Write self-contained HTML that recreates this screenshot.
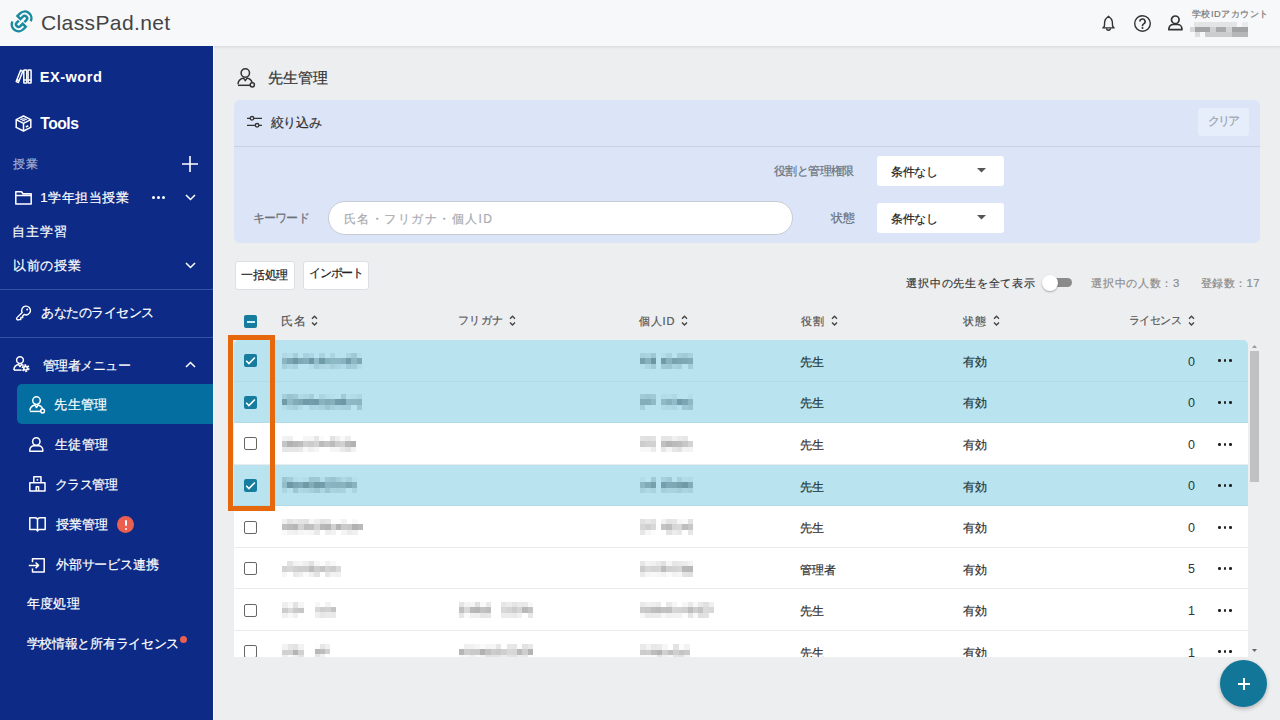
<!DOCTYPE html>
<html><head><meta charset="utf-8">
<style>
*{box-sizing:border-box;margin:0;padding:0}
html,body{width:1280px;height:720px;overflow:hidden}
body{font-family:"Liberation Sans",sans-serif;background:#edeef0;position:relative;color:#333}
.a{position:absolute}
.t{position:absolute;white-space:nowrap;line-height:1;-webkit-text-stroke:0.2px currentColor}
svg.a{overflow:visible}
#hdr{left:0;top:0;width:1280px;height:46px;background:#f7f8fa;box-shadow:0 1px 3px rgba(0,0,0,.10)}
#side{left:0;top:46px;width:213px;height:674px;background:#0c2a86}
.r{position:absolute;left:0;width:1014px;height:41.57px;background:#fff;box-shadow:inset 0 -1px 0 #e9ebee}
.r.sel{background:#b9e3ee;box-shadow:inset 0 -1px 0 #b0dbe7}
.cb{position:absolute;left:244px;width:13px;height:13px;border-radius:2px}
.cb.on{background:#187c9e}
.cb.off{border:1.5px solid #666;background:#fff}
.dots{position:absolute;left:1218px;width:14px;height:3px}
.dots i{position:absolute;top:0;width:2.6px;height:2.6px;border-radius:50%;background:#222}
.mz{position:absolute}
.mz i{position:absolute;background:var(--c)}
.blur{position:absolute;background:#000}
</style></head>
<body>
<!-- HEADER -->
<div id="hdr" class="a"></div>
<svg class="a" style="left:0;top:0" width="44" height="44" viewBox="0 0 44 44" fill="none" stroke="#178a9e" stroke-width="2.4">
<g transform="translate(21.6,21.4) rotate(-45)">
<path d="M6.6 6.4 A6.8 6.8 0 0 0 4.3 -6.8 L0.9 -6.8 L0.9 -2.5 L4.3 -2.5 A2.5 2.5 0 0 1 4.3 2.5 L1.4 2.5"/>
<path transform="rotate(180)" d="M6.6 6.4 A6.8 6.8 0 0 0 4.3 -6.8 L0.9 -6.8 L0.9 -2.5 L4.3 -2.5 A2.5 2.5 0 0 1 4.3 2.5 L1.4 2.5"/>
</g></svg>
<svg class="a" style="left:1102px;top:14.5px" width="13" height="17" viewBox="0 0 13 17" fill="none" stroke="#333" stroke-width="1.4" stroke-linejoin="round">
  <path d="M6.5 1.2 C4.6 2.6 3 3.8 2.7 6.5 L2.4 11.3 L0.9 12.9 H12.1 L10.6 11.3 L10.3 6.5 C10 3.8 8.4 2.6 6.5 1.2 Z"/>
  <path d="M4.6 13.3 a1.9 1.9 0 0 0 3.8 0"/>
</svg>
<svg class="a" style="left:1133.5px;top:14.5px" width="17" height="17" viewBox="0 0 17 17" fill="none" stroke="#333" stroke-width="1.4">
  <circle cx="8.5" cy="8.5" r="7.8"/>
  <path d="M5.9 6.6 a2.6 2.6 0 1 1 3.8 2.3 c-.8.4 -1.2.8 -1.2 1.7 v.6" stroke-width="1.6"/>
  <circle cx="8.5" cy="13" r="1" fill="#333" stroke="none"/>
</svg>
<svg class="a" style="left:1168px;top:15px" width="15" height="16" viewBox="0 0 15 16" fill="none" stroke="#333" stroke-width="1.7" stroke-linejoin="round">
  <circle cx="7.3" cy="4.8" r="3.8"/>
  <path d="M0.9 14.7 v-1 a4.2 4.2 0 0 1 4.2 -4.2 h4.6 a4.2 4.2 0 0 1 4.2 4.2 v1 Z"/>
</svg>
<div class="a" style="left:0;top:0;filter:blur(0.5px)"><div class="a" style="left:1194px;top:22px;width:43px;height:5px;background:#e3e4e6"></div><div class="a" style="left:1242px;top:22px;width:6px;height:5px;background:#eaebed"></div><div class="a" style="left:1190px;top:27px;width:5px;height:5px;background:#d6d7d9"></div><div class="a" style="left:1195px;top:27px;width:15px;height:5px;background:#a3a4a6"></div><div class="a" style="left:1210px;top:27px;width:6px;height:5px;background:#cfd0d2"></div><div class="a" style="left:1216px;top:27px;width:10px;height:5px;background:#a9aaac"></div><div class="a" style="left:1226px;top:27px;width:6px;height:5px;background:#d2d3d5"></div><div class="a" style="left:1232px;top:27px;width:16px;height:5px;background:#a2a3a5"></div><div class="a" style="left:1195px;top:32px;width:5px;height:5px;background:#dcdddf"></div><div class="a" style="left:1205px;top:32px;width:27px;height:5px;background:#cbcccd"></div><div class="a" style="left:1232px;top:32px;width:16px;height:5px;background:#b5b6b8"></div></div>

<!-- SIDEBAR -->
<div id="side" class="a"></div>
<div class="a" style="left:213px;top:46px;width:1.2px;height:674px;background:#fafbfd"></div>
<svg class="a" style="left:15px;top:69px" width="17" height="15" viewBox="0 0 17 15" fill="none" stroke="#fff" stroke-width="1.5" stroke-linejoin="round">
  <path d="M1.2 12.6 L5.6 1.3 L7.8 2.2 L3.4 13.5 Z"/>
  <rect x="8.8" y="0.9" width="3" height="13.2" rx=".5"/><rect x="13.1" y="0.9" width="3" height="13.2" rx=".5"/>
  <path d="M8.8 11 H11.8 M13.1 11 H16.1 M2 10.8 L4.2 11.7"/>
</svg>
<svg class="a" style="left:15px;top:115px" width="17" height="17" viewBox="0 0 17 17" fill="none" stroke="#fff" stroke-width="1.5" stroke-linejoin="round">
  <path d="M8.5 1 L15.8 4.6 V12.4 L8.5 16 L1.2 12.4 V4.6 Z"/>
  <path d="M1.2 4.6 L8.5 8.4 L15.8 4.6 M8.5 8.4 V16"/>
  <path d="M5.3 4.9 A4 2.4 0 0 1 11.7 4.9 M7 6 A2 1.2 0 0 1 10 6" stroke-width="1.2"/>
  <path d="M10.8 12 L13.3 10.8"/>
</svg>
<svg class="a" style="left:182px;top:156px" width="16" height="16" viewBox="0 0 16 16" stroke="#fff" stroke-width="1.6"><path d="M8 0 V16 M0 8 H16"/></svg>
<svg class="a" style="left:14.5px;top:190.5px" width="17" height="14" viewBox="0 0 17 14" fill="none" stroke="#fff" stroke-width="1.5" stroke-linejoin="round">
  <path d="M0.8 0.8 H6.5 L8 2.8 H16.2 V13 H0.8 Z M0.8 4.6 H16.2"/>
</svg>
<div class="a" style="left:151.6px;top:195.8px;width:3.2px;height:3.2px;border-radius:50%;background:#fff"></div>
<div class="a" style="left:156.7px;top:195.8px;width:3.2px;height:3.2px;border-radius:50%;background:#fff"></div>
<div class="a" style="left:161.9px;top:195.8px;width:3.2px;height:3.2px;border-radius:50%;background:#fff"></div>
<svg class="a" style="left:184.5px;top:194px" width="11" height="7" viewBox="0 0 11 7" fill="none" stroke="#fff" stroke-width="1.5"><path d="M1 1 L5.5 5.5 L10 1"/></svg>
<svg class="a" style="left:184.5px;top:262px" width="11" height="7" viewBox="0 0 11 7" fill="none" stroke="#fff" stroke-width="1.5"><path d="M1 1 L5.5 5.5 L10 1"/></svg>
<div class="a" style="left:0;top:289px;width:213px;height:1px;background:#3552a3"></div>
<svg class="a" style="left:15px;top:305.5px" width="17" height="16" viewBox="0 0 17 16" fill="none" stroke="#fff" stroke-width="1.4" stroke-linejoin="round">
  <g transform="translate(10.9,4.7) rotate(-45)">
    <path d="M-3.9 -1.4 A4.4 4.4 0 1 1 -3.9 1.4 L-6 1.4 L-7 2.6 L-8.2 1.4 L-8.8 1.4 L-9.8 2.6 L-11.2 1.4 A1.4 1.4 0 0 1 -11.2 -1.4 Z"/>
  </g>
  <circle cx="12.2" cy="3.4" r="1" fill="#fff" stroke="none"/>
</svg>
<div class="a" style="left:0;top:337px;width:213px;height:1px;background:#3552a3"></div>
<svg class="a" style="left:12.5px;top:356px" width="17" height="17" viewBox="0 0 17 17" fill="none" stroke="#fff" stroke-width="1.5" stroke-linejoin="round">
  <circle cx="7" cy="4.1" r="3.4"/><path d="M0.9 13.9 a6.2 5.6 0 0 1 4.8 -5.3 L7 10.6 L8.4 8.6 a6 5.6 0 0 1 2.2 1"/><path d="M0.9 14.1 H8.6"/>
  <circle cx="12.6" cy="12.2" r="2.6" fill="#fff" stroke="none"/>
  <circle cx="12.6" cy="12.2" r="3.1" stroke-width="1.8" stroke-dasharray="1.8 1.45"/>
  <circle cx="12.6" cy="12.2" r="1" fill="#0c2a86" stroke="none"/>
</svg>
<svg class="a" style="left:185px;top:361px" width="11" height="7" viewBox="0 0 11 7" fill="none" stroke="#fff" stroke-width="1.5"><path d="M1 6 L5.5 1.5 L10 6"/></svg>
<div class="a" style="left:17px;top:384px;width:196px;height:40px;background:#046ea0;border-radius:5px 0 0 5px"></div>
<svg class="a" style="left:29px;top:395.5px" width="17" height="17" viewBox="0 0 17 17" fill="none" stroke="#fff" stroke-width="1.5" stroke-linejoin="round">
  <circle cx="7.5" cy="4.6" r="3.8"/><path d="M0.9 14.5 a6.6 6 0 0 1 5 -5.6 L7.5 11.5 L9.1 8.9 a6.6 6 0 0 1 4.6 4.2"/><path d="M0.9 15.4 H11.8"/><circle cx="13.6" cy="15" r="1.9"/>
</svg>
<svg class="a" style="left:29px;top:437px" width="15" height="15" viewBox="0 0 15 15" fill="none" stroke="#fff" stroke-width="1.5" stroke-linejoin="round">
  <circle cx="7.3" cy="4.5" r="3.7"/><path d="M0.8 14.2 v-1.2 a4.2 4.2 0 0 1 4.2 -4.2 h4.6 a4.2 4.2 0 0 1 4.2 4.2 v1.2 Z"/>
</svg>
<svg class="a" style="left:28.5px;top:476px" width="17" height="16" viewBox="0 0 17 16" fill="none" stroke="#fff" stroke-width="1.5" stroke-linejoin="round">
  <path d="M4.8 0.8 H12 V6.8 H16 V15 H0.8 V6.8 H4.8 Z M4.8 6.8 H12"/><path d="M7.2 15 V10.8 H9.6 V15" /><circle cx="8.4" cy="3.8" r=".9" fill="#fff" stroke="none"/>
</svg>
<svg class="a" style="left:29px;top:517px" width="17" height="15" viewBox="0 0 17 15" fill="none" stroke="#fff" stroke-width="1.5" stroke-linejoin="round">
  <path d="M0.8 0.8 H6 a2.5 2.5 0 0 1 2.5 2.5 V14 a2 2 0 0 0 -2 -1.6 H0.8 Z M16.2 0.8 H11 a2.5 2.5 0 0 0 -2.5 2.5 V14 a2 2 0 0 1 2 -1.6 H16.2 Z"/>
</svg>
<div class="a" style="left:117px;top:516px;width:17px;height:17px;border-radius:50%;background:#ea5f4f"></div>
<div class="a" style="left:124.6px;top:519.5px;width:2px;height:6.5px;border-radius:1px;background:#fff"></div>
<div class="a" style="left:124.5px;top:527.5px;width:2.2px;height:2.2px;border-radius:50%;background:#fff"></div>
<svg class="a" style="left:28px;top:557.5px" width="17" height="15" viewBox="0 0 17 15" fill="none" stroke="#fff" stroke-width="1.5" stroke-linejoin="round">
  <path d="M4.5 4.2 V0.8 H16.2 V14 H4.5 V10.6 M0.8 7.4 H10.5 M7.6 4.5 L10.5 7.4 L7.6 10.3"/>
</svg>
<div class="a" style="left:180px;top:635.5px;width:7px;height:7px;border-radius:50%;background:#ea5f4f"></div>

<!-- MAIN -->
<svg class="a" style="left:237px;top:67.5px" width="19" height="19" viewBox="0 0 19 19" fill="none" stroke="#333" stroke-width="1.5" stroke-linejoin="round">
  <circle cx="8.3" cy="5" r="4.2"/><path d="M1 16.3 a7.3 6.6 0 0 1 5.5 -6.2 L8.3 12.6 L10 10.1 a7.3 6.6 0 0 1 5.2 4.6"/><path d="M1 17.3 H13"/><circle cx="15.3" cy="16.8" r="2.1"/>
</svg>
<div class="a" style="left:234px;top:100px;width:1026px;height:143px;background:#dbe5f7;border-radius:6px"></div>
<div class="a" style="left:234px;top:146px;width:1026px;height:1px;background:#c7d2e5"></div>
<svg class="a" style="left:247px;top:116px" width="15" height="12" viewBox="0 0 15 12" fill="none" stroke="#333" stroke-width="1.3">
  <path d="M0 2.3 H3.2 M6.8 2.3 H15 M0 9.3 H8.3 M11.9 9.3 H15"/><circle cx="5" cy="2.3" r="1.8"/><circle cx="10.1" cy="9.3" r="1.8"/>
</svg>
<div class="a" style="left:1198px;top:108px;width:51px;height:28px;background:#e6edfb;border-radius:3px"></div>
<div class="a" style="left:877px;top:156px;width:127px;height:30px;background:#fff;border-radius:3px"></div>
<svg class="a" style="left:977px;top:168px" width="9" height="5" viewBox="0 0 9 5"><path d="M0 0 H9 L4.5 4.5 Z" fill="#555"/></svg>
<div class="a" style="left:327.5px;top:201px;width:465px;height:34px;background:#fff;border-radius:17px;border:1px solid #c8ccd4"></div>
<div class="a" style="left:877px;top:203px;width:127px;height:30px;background:#fff;border-radius:3px"></div>
<svg class="a" style="left:977px;top:215px" width="9" height="5" viewBox="0 0 9 5"><path d="M0 0 H9 L4.5 4.5 Z" fill="#555"/></svg>
<div class="a" style="left:235px;top:260.5px;width:60px;height:29px;background:#fff;border:1px solid #dcdfe4;border-radius:3px"></div>
<div class="a" style="left:302.5px;top:260.5px;width:66px;height:29px;background:#fff;border:1px solid #dcdfe4;border-radius:3px"></div>
<div class="a" style="left:1043px;top:278px;width:29px;height:9px;border-radius:5px;background:#8a8a8a"></div>
<div class="a" style="left:1041.5px;top:274.5px;width:16px;height:16px;border-radius:50%;background:#fff;box-shadow:0 1px 2px rgba(0,0,0,.3)"></div>

<div class="a" style="left:244px;top:315px;width:13px;height:13px;border-radius:2px;background:#187c9e"></div>
<div class="a" style="left:246.5px;top:320.5px;width:8px;height:2px;background:#c9f1fb"></div>
<svg class="a" style="left:311px;top:315px" width="7" height="12" viewBox="0 0 7 12" fill="none" stroke="#444" stroke-width="1.4"><path d="M1 3.8 L3.5 1.3 L6 3.8 M1 7.5 L3.5 10 L6 7.5"/></svg>
<svg class="a" style="left:509px;top:315px" width="7" height="12" viewBox="0 0 7 12" fill="none" stroke="#444" stroke-width="1.4"><path d="M1 3.8 L3.5 1.3 L6 3.8 M1 7.5 L3.5 10 L6 7.5"/></svg>
<svg class="a" style="left:681px;top:315px" width="7" height="12" viewBox="0 0 7 12" fill="none" stroke="#444" stroke-width="1.4"><path d="M1 3.8 L3.5 1.3 L6 3.8 M1 7.5 L3.5 10 L6 7.5"/></svg>
<svg class="a" style="left:830.5px;top:315px" width="7" height="12" viewBox="0 0 7 12" fill="none" stroke="#444" stroke-width="1.4"><path d="M1 3.8 L3.5 1.3 L6 3.8 M1 7.5 L3.5 10 L6 7.5"/></svg>
<svg class="a" style="left:992.5px;top:315px" width="7" height="12" viewBox="0 0 7 12" fill="none" stroke="#444" stroke-width="1.4"><path d="M1 3.8 L3.5 1.3 L6 3.8 M1 7.5 L3.5 10 L6 7.5"/></svg>
<svg class="a" style="left:1188px;top:315px" width="7" height="12" viewBox="0 0 7 12" fill="none" stroke="#444" stroke-width="1.4"><path d="M1 3.8 L3.5 1.3 L6 3.8 M1 7.5 L3.5 10 L6 7.5"/></svg>

<div class="a" style="left:234px;top:340px;width:1014px;height:317px;overflow:hidden;border-radius:5px 5px 0 0">
<div class="r sel" style="top:0.00px"></div>
<div class="r sel" style="top:41.57px"></div>
<div class="r" style="top:83.14px"></div>
<div class="r sel" style="top:124.71px"></div>
<div class="r" style="top:166.28px"></div>
<div class="r" style="top:207.85px"></div>
<div class="r" style="top:249.42px"></div>
<div class="r" style="top:290.99px"></div>
</div>
<div class="a" style="left:0;top:0;width:1280px;height:657px;overflow:hidden">
<div class="cb on" style="top:354.29px"></div><svg class="a" style="left:244px;top:354.29px" width="13" height="13" viewBox="0 0 13 13" fill="none" stroke="#fff" stroke-width="1.6"><path d="M2.2 6.8 L4.9 9.5 L10.9 3.5"/></svg>
<div class="mz" style="left:282px;top:353px;width:80px;height:16.00px;--c:#0d3a48"><i style="left:0px;top:0px;width:5px;height:5px;opacity:0.06"></i><i style="left:5px;top:0px;width:6px;height:5px;opacity:0.03"></i><i style="left:11px;top:0px;width:5px;height:5px;opacity:0.12"></i><i style="left:21px;top:0px;width:6px;height:5px;opacity:0.10"></i><i style="left:27px;top:0px;width:5px;height:5px;opacity:0.07"></i><i style="left:37px;top:0px;width:6px;height:5px;opacity:0.09"></i><i style="left:48px;top:0px;width:5px;height:5px;opacity:0.08"></i><i style="left:64px;top:0px;width:5px;height:5px;opacity:0.08"></i><i style="left:69px;top:0px;width:6px;height:5px;opacity:0.15"></i><i style="left:75px;top:0px;width:5px;height:5px;opacity:0.02"></i><i style="left:0px;top:5px;width:5px;height:6px;opacity:0.27"></i><i style="left:5px;top:5px;width:6px;height:6px;opacity:0.36"></i><i style="left:11px;top:5px;width:5px;height:6px;opacity:0.44"></i><i style="left:16px;top:5px;width:5px;height:6px;opacity:0.35"></i><i style="left:21px;top:5px;width:6px;height:6px;opacity:0.31"></i><i style="left:27px;top:5px;width:5px;height:6px;opacity:0.44"></i><i style="left:32px;top:5px;width:5px;height:6px;opacity:0.23"></i><i style="left:37px;top:5px;width:6px;height:6px;opacity:0.42"></i><i style="left:43px;top:5px;width:5px;height:6px;opacity:0.29"></i><i style="left:48px;top:5px;width:5px;height:6px;opacity:0.25"></i><i style="left:53px;top:5px;width:6px;height:6px;opacity:0.25"></i><i style="left:59px;top:5px;width:5px;height:6px;opacity:0.29"></i><i style="left:64px;top:5px;width:5px;height:6px;opacity:0.41"></i><i style="left:69px;top:5px;width:6px;height:6px;opacity:0.26"></i><i style="left:75px;top:5px;width:5px;height:6px;opacity:0.35"></i><i style="left:0px;top:11px;width:5px;height:5px;opacity:0.12"></i><i style="left:5px;top:11px;width:6px;height:5px;opacity:0.07"></i><i style="left:11px;top:11px;width:5px;height:5px;opacity:0.10"></i><i style="left:27px;top:11px;width:5px;height:5px;opacity:0.04"></i><i style="left:32px;top:11px;width:5px;height:5px;opacity:0.12"></i><i style="left:37px;top:11px;width:6px;height:5px;opacity:0.08"></i><i style="left:43px;top:11px;width:5px;height:5px;opacity:0.06"></i><i style="left:48px;top:11px;width:5px;height:5px;opacity:0.11"></i><i style="left:53px;top:11px;width:6px;height:5px;opacity:0.08"></i><i style="left:59px;top:11px;width:5px;height:5px;opacity:0.05"></i><i style="left:64px;top:11px;width:5px;height:5px;opacity:0.14"></i><i style="left:69px;top:11px;width:6px;height:5px;opacity:0.13"></i><i style="left:75px;top:11px;width:5px;height:5px;opacity:0.04"></i></div>
<div class="mz" style="left:640px;top:353px;width:16px;height:16.00px;--c:#0d3a48"><i style="left:0px;top:0px;width:5px;height:5px;opacity:0.10"></i><i style="left:5px;top:0px;width:6px;height:5px;opacity:0.09"></i><i style="left:11px;top:0px;width:5px;height:5px;opacity:0.16"></i><i style="left:0px;top:5px;width:5px;height:6px;opacity:0.39"></i><i style="left:5px;top:5px;width:6px;height:6px;opacity:0.29"></i><i style="left:11px;top:5px;width:5px;height:6px;opacity:0.45"></i><i style="left:0px;top:11px;width:5px;height:5px;opacity:0.02"></i><i style="left:5px;top:11px;width:6px;height:5px;opacity:0.08"></i><i style="left:11px;top:11px;width:5px;height:5px;opacity:0.14"></i></div>
<div class="mz" style="left:661px;top:353px;width:32px;height:16.00px;--c:#0d3a48"><i style="left:0px;top:0px;width:5px;height:5px;opacity:0.03"></i><i style="left:5px;top:0px;width:6px;height:5px;opacity:0.09"></i><i style="left:16px;top:0px;width:5px;height:5px;opacity:0.12"></i><i style="left:21px;top:0px;width:6px;height:5px;opacity:0.14"></i><i style="left:27px;top:0px;width:5px;height:5px;opacity:0.10"></i><i style="left:0px;top:5px;width:5px;height:6px;opacity:0.42"></i><i style="left:5px;top:5px;width:6px;height:6px;opacity:0.29"></i><i style="left:11px;top:5px;width:5px;height:6px;opacity:0.38"></i><i style="left:16px;top:5px;width:5px;height:6px;opacity:0.36"></i><i style="left:21px;top:5px;width:6px;height:6px;opacity:0.35"></i><i style="left:27px;top:5px;width:5px;height:6px;opacity:0.32"></i><i style="left:0px;top:11px;width:5px;height:5px;opacity:0.15"></i><i style="left:5px;top:11px;width:6px;height:5px;opacity:0.17"></i><i style="left:11px;top:11px;width:5px;height:5px;opacity:0.09"></i><i style="left:16px;top:11px;width:5px;height:5px;opacity:0.12"></i><i style="left:27px;top:11px;width:5px;height:5px;opacity:0.13"></i></div>
<div class="dots" style="top:359px"><i style="left:0"></i><i style="left:5.5px"></i><i style="left:11px"></i></div>
<div class="cb on" style="top:395.86px"></div><svg class="a" style="left:244px;top:395.86px" width="13" height="13" viewBox="0 0 13 13" fill="none" stroke="#fff" stroke-width="1.6"><path d="M2.2 6.8 L4.9 9.5 L10.9 3.5"/></svg>
<div class="mz" style="left:282px;top:394px;width:80px;height:16.00px;--c:#0d3a48"><i style="left:0px;top:0px;width:5px;height:5px;opacity:0.12"></i><i style="left:5px;top:0px;width:6px;height:5px;opacity:0.18"></i><i style="left:11px;top:0px;width:5px;height:5px;opacity:0.15"></i><i style="left:16px;top:0px;width:5px;height:5px;opacity:0.05"></i><i style="left:21px;top:0px;width:6px;height:5px;opacity:0.07"></i><i style="left:27px;top:0px;width:5px;height:5px;opacity:0.12"></i><i style="left:37px;top:0px;width:6px;height:5px;opacity:0.08"></i><i style="left:43px;top:0px;width:5px;height:5px;opacity:0.03"></i><i style="left:48px;top:0px;width:5px;height:5px;opacity:0.02"></i><i style="left:59px;top:0px;width:5px;height:5px;opacity:0.14"></i><i style="left:64px;top:0px;width:5px;height:5px;opacity:0.02"></i><i style="left:69px;top:0px;width:6px;height:5px;opacity:0.04"></i><i style="left:75px;top:0px;width:5px;height:5px;opacity:0.07"></i><i style="left:0px;top:5px;width:5px;height:6px;opacity:0.42"></i><i style="left:5px;top:5px;width:6px;height:6px;opacity:0.24"></i><i style="left:11px;top:5px;width:5px;height:6px;opacity:0.32"></i><i style="left:16px;top:5px;width:5px;height:6px;opacity:0.35"></i><i style="left:21px;top:5px;width:6px;height:6px;opacity:0.42"></i><i style="left:27px;top:5px;width:5px;height:6px;opacity:0.41"></i><i style="left:32px;top:5px;width:5px;height:6px;opacity:0.42"></i><i style="left:37px;top:5px;width:6px;height:6px;opacity:0.28"></i><i style="left:43px;top:5px;width:5px;height:6px;opacity:0.32"></i><i style="left:48px;top:5px;width:5px;height:6px;opacity:0.30"></i><i style="left:53px;top:5px;width:6px;height:6px;opacity:0.42"></i><i style="left:59px;top:5px;width:5px;height:6px;opacity:0.44"></i><i style="left:64px;top:5px;width:5px;height:6px;opacity:0.25"></i><i style="left:69px;top:5px;width:6px;height:6px;opacity:0.26"></i><i style="left:75px;top:5px;width:5px;height:6px;opacity:0.27"></i><i style="left:0px;top:11px;width:5px;height:5px;opacity:0.04"></i><i style="left:5px;top:11px;width:6px;height:5px;opacity:0.09"></i><i style="left:11px;top:11px;width:5px;height:5px;opacity:0.11"></i><i style="left:16px;top:11px;width:5px;height:5px;opacity:0.05"></i><i style="left:27px;top:11px;width:5px;height:5px;opacity:0.08"></i><i style="left:32px;top:11px;width:5px;height:5px;opacity:0.07"></i><i style="left:37px;top:11px;width:6px;height:5px;opacity:0.10"></i><i style="left:43px;top:11px;width:5px;height:5px;opacity:0.17"></i><i style="left:48px;top:11px;width:5px;height:5px;opacity:0.12"></i><i style="left:53px;top:11px;width:6px;height:5px;opacity:0.09"></i><i style="left:59px;top:11px;width:5px;height:5px;opacity:0.11"></i><i style="left:64px;top:11px;width:5px;height:5px;opacity:0.12"></i><i style="left:75px;top:11px;width:5px;height:5px;opacity:0.16"></i></div>
<div class="mz" style="left:640px;top:394px;width:16px;height:16.00px;--c:#0d3a48"><i style="left:0px;top:0px;width:5px;height:5px;opacity:0.14"></i><i style="left:5px;top:0px;width:6px;height:5px;opacity:0.16"></i><i style="left:11px;top:0px;width:5px;height:5px;opacity:0.14"></i><i style="left:0px;top:5px;width:5px;height:6px;opacity:0.31"></i><i style="left:5px;top:5px;width:6px;height:6px;opacity:0.31"></i><i style="left:11px;top:5px;width:5px;height:6px;opacity:0.24"></i><i style="left:0px;top:11px;width:5px;height:5px;opacity:0.11"></i></div>
<div class="mz" style="left:661px;top:394px;width:32px;height:16.00px;--c:#0d3a48"><i style="left:0px;top:0px;width:5px;height:5px;opacity:0.04"></i><i style="left:5px;top:0px;width:6px;height:5px;opacity:0.03"></i><i style="left:11px;top:0px;width:5px;height:5px;opacity:0.06"></i><i style="left:27px;top:0px;width:5px;height:5px;opacity:0.03"></i><i style="left:0px;top:5px;width:5px;height:6px;opacity:0.24"></i><i style="left:5px;top:5px;width:6px;height:6px;opacity:0.30"></i><i style="left:11px;top:5px;width:5px;height:6px;opacity:0.23"></i><i style="left:16px;top:5px;width:5px;height:6px;opacity:0.42"></i><i style="left:21px;top:5px;width:6px;height:6px;opacity:0.36"></i><i style="left:27px;top:5px;width:5px;height:6px;opacity:0.25"></i><i style="left:0px;top:11px;width:5px;height:5px;opacity:0.05"></i><i style="left:5px;top:11px;width:6px;height:5px;opacity:0.06"></i><i style="left:11px;top:11px;width:5px;height:5px;opacity:0.07"></i><i style="left:16px;top:11px;width:5px;height:5px;opacity:0.02"></i><i style="left:21px;top:11px;width:6px;height:5px;opacity:0.15"></i><i style="left:27px;top:11px;width:5px;height:5px;opacity:0.18"></i></div>
<div class="dots" style="top:401px"><i style="left:0"></i><i style="left:5.5px"></i><i style="left:11px"></i></div>
<div class="cb off" style="top:437.43px"></div>
<div class="mz" style="left:282px;top:436px;width:74px;height:15.86px;--c:#555"><i style="left:0px;top:0px;width:5px;height:5px;opacity:0.08"></i><i style="left:5px;top:0px;width:6px;height:5px;opacity:0.09"></i><i style="left:21px;top:0px;width:5px;height:5px;opacity:0.06"></i><i style="left:26px;top:0px;width:6px;height:5px;opacity:0.05"></i><i style="left:32px;top:0px;width:5px;height:5px;opacity:0.15"></i><i style="left:37px;top:0px;width:5px;height:5px;opacity:0.03"></i><i style="left:48px;top:0px;width:5px;height:5px;opacity:0.17"></i><i style="left:53px;top:0px;width:5px;height:5px;opacity:0.10"></i><i style="left:58px;top:0px;width:5px;height:5px;opacity:0.03"></i><i style="left:63px;top:0px;width:6px;height:5px;opacity:0.10"></i><i style="left:0px;top:5px;width:5px;height:6px;opacity:0.34"></i><i style="left:5px;top:5px;width:6px;height:6px;opacity:0.45"></i><i style="left:11px;top:5px;width:5px;height:6px;opacity:0.42"></i><i style="left:16px;top:5px;width:5px;height:6px;opacity:0.38"></i><i style="left:21px;top:5px;width:5px;height:6px;opacity:0.28"></i><i style="left:26px;top:5px;width:6px;height:6px;opacity:0.30"></i><i style="left:32px;top:5px;width:5px;height:6px;opacity:0.26"></i><i style="left:37px;top:5px;width:5px;height:6px;opacity:0.40"></i><i style="left:42px;top:5px;width:6px;height:6px;opacity:0.34"></i><i style="left:48px;top:5px;width:5px;height:6px;opacity:0.40"></i><i style="left:53px;top:5px;width:5px;height:6px;opacity:0.30"></i><i style="left:58px;top:5px;width:5px;height:6px;opacity:0.27"></i><i style="left:63px;top:5px;width:6px;height:6px;opacity:0.41"></i><i style="left:69px;top:5px;width:5px;height:6px;opacity:0.45"></i><i style="left:0px;top:11px;width:5px;height:5px;opacity:0.15"></i><i style="left:5px;top:11px;width:6px;height:5px;opacity:0.15"></i><i style="left:11px;top:11px;width:5px;height:5px;opacity:0.15"></i><i style="left:16px;top:11px;width:5px;height:5px;opacity:0.13"></i><i style="left:21px;top:11px;width:5px;height:5px;opacity:0.04"></i><i style="left:26px;top:11px;width:6px;height:5px;opacity:0.09"></i><i style="left:32px;top:11px;width:5px;height:5px;opacity:0.06"></i><i style="left:48px;top:11px;width:5px;height:5px;opacity:0.05"></i><i style="left:53px;top:11px;width:5px;height:5px;opacity:0.05"></i><i style="left:58px;top:11px;width:5px;height:5px;opacity:0.12"></i><i style="left:63px;top:11px;width:6px;height:5px;opacity:0.17"></i><i style="left:69px;top:11px;width:5px;height:5px;opacity:0.08"></i></div>
<div class="mz" style="left:640px;top:436px;width:16px;height:16.00px;--c:#555"><i style="left:0px;top:0px;width:5px;height:5px;opacity:0.17"></i><i style="left:5px;top:0px;width:6px;height:5px;opacity:0.18"></i><i style="left:11px;top:0px;width:5px;height:5px;opacity:0.17"></i><i style="left:0px;top:5px;width:5px;height:6px;opacity:0.30"></i><i style="left:5px;top:5px;width:6px;height:6px;opacity:0.27"></i><i style="left:11px;top:5px;width:5px;height:6px;opacity:0.27"></i><i style="left:0px;top:11px;width:5px;height:5px;opacity:0.04"></i><i style="left:5px;top:11px;width:6px;height:5px;opacity:0.04"></i><i style="left:11px;top:11px;width:5px;height:5px;opacity:0.11"></i></div>
<div class="mz" style="left:661px;top:436px;width:32px;height:16.00px;--c:#555"><i style="left:0px;top:0px;width:5px;height:5px;opacity:0.16"></i><i style="left:5px;top:0px;width:6px;height:5px;opacity:0.15"></i><i style="left:11px;top:0px;width:5px;height:5px;opacity:0.09"></i><i style="left:16px;top:0px;width:5px;height:5px;opacity:0.12"></i><i style="left:21px;top:0px;width:6px;height:5px;opacity:0.14"></i><i style="left:0px;top:5px;width:5px;height:6px;opacity:0.37"></i><i style="left:5px;top:5px;width:6px;height:6px;opacity:0.43"></i><i style="left:11px;top:5px;width:5px;height:6px;opacity:0.40"></i><i style="left:16px;top:5px;width:5px;height:6px;opacity:0.39"></i><i style="left:21px;top:5px;width:6px;height:6px;opacity:0.33"></i><i style="left:27px;top:5px;width:5px;height:6px;opacity:0.26"></i><i style="left:0px;top:11px;width:5px;height:5px;opacity:0.14"></i><i style="left:5px;top:11px;width:6px;height:5px;opacity:0.06"></i><i style="left:11px;top:11px;width:5px;height:5px;opacity:0.14"></i><i style="left:16px;top:11px;width:5px;height:5px;opacity:0.17"></i><i style="left:21px;top:11px;width:6px;height:5px;opacity:0.07"></i><i style="left:27px;top:11px;width:5px;height:5px;opacity:0.07"></i></div>
<div class="dots" style="top:443px"><i style="left:0"></i><i style="left:5.5px"></i><i style="left:11px"></i></div>
<div class="cb on" style="top:479.00px"></div><svg class="a" style="left:244px;top:479.00px" width="13" height="13" viewBox="0 0 13 13" fill="none" stroke="#fff" stroke-width="1.6"><path d="M2.2 6.8 L4.9 9.5 L10.9 3.5"/></svg>
<div class="mz" style="left:282px;top:477px;width:75px;height:16.07px;--c:#0d3a48"><i style="left:0px;top:0px;width:5px;height:5px;opacity:0.17"></i><i style="left:5px;top:0px;width:6px;height:5px;opacity:0.13"></i><i style="left:11px;top:0px;width:5px;height:5px;opacity:0.03"></i><i style="left:16px;top:0px;width:5px;height:5px;opacity:0.02"></i><i style="left:21px;top:0px;width:6px;height:5px;opacity:0.03"></i><i style="left:27px;top:0px;width:5px;height:5px;opacity:0.16"></i><i style="left:32px;top:0px;width:6px;height:5px;opacity:0.15"></i><i style="left:38px;top:0px;width:5px;height:5px;opacity:0.03"></i><i style="left:43px;top:0px;width:5px;height:5px;opacity:0.15"></i><i style="left:48px;top:0px;width:6px;height:5px;opacity:0.18"></i><i style="left:54px;top:0px;width:5px;height:5px;opacity:0.12"></i><i style="left:59px;top:0px;width:5px;height:5px;opacity:0.06"></i><i style="left:64px;top:0px;width:6px;height:5px;opacity:0.10"></i><i style="left:70px;top:0px;width:5px;height:5px;opacity:0.02"></i><i style="left:0px;top:5px;width:5px;height:6px;opacity:0.22"></i><i style="left:5px;top:5px;width:6px;height:6px;opacity:0.44"></i><i style="left:11px;top:5px;width:5px;height:6px;opacity:0.37"></i><i style="left:16px;top:5px;width:5px;height:6px;opacity:0.34"></i><i style="left:21px;top:5px;width:6px;height:6px;opacity:0.43"></i><i style="left:27px;top:5px;width:5px;height:6px;opacity:0.32"></i><i style="left:32px;top:5px;width:6px;height:6px;opacity:0.42"></i><i style="left:38px;top:5px;width:5px;height:6px;opacity:0.41"></i><i style="left:43px;top:5px;width:5px;height:6px;opacity:0.27"></i><i style="left:48px;top:5px;width:6px;height:6px;opacity:0.28"></i><i style="left:54px;top:5px;width:5px;height:6px;opacity:0.29"></i><i style="left:59px;top:5px;width:5px;height:6px;opacity:0.28"></i><i style="left:64px;top:5px;width:6px;height:6px;opacity:0.35"></i><i style="left:70px;top:5px;width:5px;height:6px;opacity:0.28"></i><i style="left:0px;top:11px;width:5px;height:5px;opacity:0.08"></i><i style="left:5px;top:11px;width:6px;height:5px;opacity:0.02"></i><i style="left:11px;top:11px;width:5px;height:5px;opacity:0.16"></i><i style="left:16px;top:11px;width:5px;height:5px;opacity:0.06"></i><i style="left:21px;top:11px;width:6px;height:5px;opacity:0.08"></i><i style="left:27px;top:11px;width:5px;height:5px;opacity:0.11"></i><i style="left:32px;top:11px;width:6px;height:5px;opacity:0.16"></i><i style="left:38px;top:11px;width:5px;height:5px;opacity:0.08"></i><i style="left:43px;top:11px;width:5px;height:5px;opacity:0.17"></i><i style="left:48px;top:11px;width:6px;height:5px;opacity:0.09"></i><i style="left:54px;top:11px;width:5px;height:5px;opacity:0.10"></i><i style="left:59px;top:11px;width:5px;height:5px;opacity:0.09"></i><i style="left:70px;top:11px;width:5px;height:5px;opacity:0.08"></i></div>
<div class="mz" style="left:640px;top:477px;width:16px;height:16.00px;--c:#0d3a48"><i style="left:0px;top:0px;width:5px;height:5px;opacity:0.03"></i><i style="left:11px;top:0px;width:5px;height:5px;opacity:0.14"></i><i style="left:0px;top:5px;width:5px;height:6px;opacity:0.26"></i><i style="left:5px;top:5px;width:6px;height:6px;opacity:0.33"></i><i style="left:11px;top:5px;width:5px;height:6px;opacity:0.39"></i><i style="left:0px;top:11px;width:5px;height:5px;opacity:0.10"></i><i style="left:5px;top:11px;width:6px;height:5px;opacity:0.06"></i><i style="left:11px;top:11px;width:5px;height:5px;opacity:0.09"></i></div>
<div class="mz" style="left:661px;top:477px;width:32px;height:16.00px;--c:#0d3a48"><i style="left:0px;top:0px;width:5px;height:5px;opacity:0.10"></i><i style="left:5px;top:0px;width:6px;height:5px;opacity:0.14"></i><i style="left:16px;top:0px;width:5px;height:5px;opacity:0.10"></i><i style="left:21px;top:0px;width:6px;height:5px;opacity:0.04"></i><i style="left:27px;top:0px;width:5px;height:5px;opacity:0.05"></i><i style="left:0px;top:5px;width:5px;height:6px;opacity:0.40"></i><i style="left:5px;top:5px;width:6px;height:6px;opacity:0.34"></i><i style="left:11px;top:5px;width:5px;height:6px;opacity:0.35"></i><i style="left:16px;top:5px;width:5px;height:6px;opacity:0.39"></i><i style="left:21px;top:5px;width:6px;height:6px;opacity:0.43"></i><i style="left:27px;top:5px;width:5px;height:6px;opacity:0.32"></i><i style="left:0px;top:11px;width:5px;height:5px;opacity:0.11"></i><i style="left:5px;top:11px;width:6px;height:5px;opacity:0.09"></i><i style="left:11px;top:11px;width:5px;height:5px;opacity:0.09"></i><i style="left:16px;top:11px;width:5px;height:5px;opacity:0.12"></i><i style="left:21px;top:11px;width:6px;height:5px;opacity:0.08"></i><i style="left:27px;top:11px;width:5px;height:5px;opacity:0.10"></i></div>
<div class="dots" style="top:484px"><i style="left:0"></i><i style="left:5.5px"></i><i style="left:11px"></i></div>
<div class="cb off" style="top:520.56px"></div>
<div class="mz" style="left:282px;top:519px;width:81px;height:16.20px;--c:#555"><i style="left:0px;top:0px;width:5px;height:5px;opacity:0.09"></i><i style="left:5px;top:0px;width:6px;height:5px;opacity:0.17"></i><i style="left:11px;top:0px;width:5px;height:5px;opacity:0.13"></i><i style="left:16px;top:0px;width:6px;height:5px;opacity:0.16"></i><i style="left:22px;top:0px;width:5px;height:5px;opacity:0.17"></i><i style="left:27px;top:0px;width:5px;height:5px;opacity:0.05"></i><i style="left:32px;top:0px;width:6px;height:5px;opacity:0.10"></i><i style="left:38px;top:0px;width:5px;height:5px;opacity:0.17"></i><i style="left:43px;top:0px;width:6px;height:5px;opacity:0.15"></i><i style="left:49px;top:0px;width:5px;height:5px;opacity:0.02"></i><i style="left:54px;top:0px;width:5px;height:5px;opacity:0.02"></i><i style="left:59px;top:0px;width:6px;height:5px;opacity:0.08"></i><i style="left:70px;top:0px;width:6px;height:5px;opacity:0.04"></i><i style="left:0px;top:5px;width:5px;height:6px;opacity:0.37"></i><i style="left:5px;top:5px;width:6px;height:6px;opacity:0.40"></i><i style="left:11px;top:5px;width:5px;height:6px;opacity:0.43"></i><i style="left:16px;top:5px;width:6px;height:6px;opacity:0.26"></i><i style="left:22px;top:5px;width:5px;height:6px;opacity:0.38"></i><i style="left:27px;top:5px;width:5px;height:6px;opacity:0.37"></i><i style="left:32px;top:5px;width:6px;height:6px;opacity:0.25"></i><i style="left:38px;top:5px;width:5px;height:6px;opacity:0.42"></i><i style="left:43px;top:5px;width:6px;height:6px;opacity:0.44"></i><i style="left:49px;top:5px;width:5px;height:6px;opacity:0.27"></i><i style="left:54px;top:5px;width:5px;height:6px;opacity:0.44"></i><i style="left:59px;top:5px;width:6px;height:6px;opacity:0.31"></i><i style="left:65px;top:5px;width:5px;height:6px;opacity:0.33"></i><i style="left:70px;top:5px;width:6px;height:6px;opacity:0.45"></i><i style="left:76px;top:5px;width:5px;height:6px;opacity:0.41"></i><i style="left:0px;top:11px;width:5px;height:5px;opacity:0.03"></i><i style="left:5px;top:11px;width:6px;height:5px;opacity:0.08"></i><i style="left:11px;top:11px;width:5px;height:5px;opacity:0.09"></i><i style="left:16px;top:11px;width:6px;height:5px;opacity:0.06"></i><i style="left:22px;top:11px;width:5px;height:5px;opacity:0.04"></i><i style="left:27px;top:11px;width:5px;height:5px;opacity:0.06"></i><i style="left:32px;top:11px;width:6px;height:5px;opacity:0.13"></i><i style="left:43px;top:11px;width:6px;height:5px;opacity:0.10"></i><i style="left:49px;top:11px;width:5px;height:5px;opacity:0.08"></i><i style="left:59px;top:11px;width:6px;height:5px;opacity:0.06"></i><i style="left:65px;top:11px;width:5px;height:5px;opacity:0.11"></i><i style="left:70px;top:11px;width:6px;height:5px;opacity:0.09"></i></div>
<div class="mz" style="left:640px;top:519px;width:16px;height:16.00px;--c:#555"><i style="left:0px;top:0px;width:5px;height:5px;opacity:0.18"></i><i style="left:5px;top:0px;width:6px;height:5px;opacity:0.14"></i><i style="left:11px;top:0px;width:5px;height:5px;opacity:0.17"></i><i style="left:0px;top:5px;width:5px;height:6px;opacity:0.24"></i><i style="left:5px;top:5px;width:6px;height:6px;opacity:0.28"></i><i style="left:11px;top:5px;width:5px;height:6px;opacity:0.23"></i><i style="left:0px;top:11px;width:5px;height:5px;opacity:0.14"></i><i style="left:5px;top:11px;width:6px;height:5px;opacity:0.05"></i><i style="left:11px;top:11px;width:5px;height:5px;opacity:0.02"></i></div>
<div class="mz" style="left:661px;top:519px;width:32px;height:16.00px;--c:#555"><i style="left:0px;top:0px;width:5px;height:5px;opacity:0.08"></i><i style="left:5px;top:0px;width:6px;height:5px;opacity:0.16"></i><i style="left:11px;top:0px;width:5px;height:5px;opacity:0.15"></i><i style="left:16px;top:0px;width:5px;height:5px;opacity:0.05"></i><i style="left:21px;top:0px;width:6px;height:5px;opacity:0.03"></i><i style="left:27px;top:0px;width:5px;height:5px;opacity:0.17"></i><i style="left:0px;top:5px;width:5px;height:6px;opacity:0.35"></i><i style="left:5px;top:5px;width:6px;height:6px;opacity:0.38"></i><i style="left:11px;top:5px;width:5px;height:6px;opacity:0.24"></i><i style="left:16px;top:5px;width:5px;height:6px;opacity:0.23"></i><i style="left:21px;top:5px;width:6px;height:6px;opacity:0.38"></i><i style="left:27px;top:5px;width:5px;height:6px;opacity:0.32"></i><i style="left:5px;top:11px;width:6px;height:5px;opacity:0.17"></i><i style="left:11px;top:11px;width:5px;height:5px;opacity:0.11"></i><i style="left:16px;top:11px;width:5px;height:5px;opacity:0.14"></i><i style="left:27px;top:11px;width:5px;height:5px;opacity:0.15"></i></div>
<div class="dots" style="top:526px"><i style="left:0"></i><i style="left:5.5px"></i><i style="left:11px"></i></div>
<div class="cb off" style="top:562.13px"></div>
<div class="mz" style="left:282px;top:561px;width:59px;height:16.09px;--c:#555"><i style="left:5px;top:0px;width:6px;height:5px;opacity:0.16"></i><i style="left:11px;top:0px;width:5px;height:5px;opacity:0.08"></i><i style="left:16px;top:0px;width:5px;height:5px;opacity:0.06"></i><i style="left:21px;top:0px;width:6px;height:5px;opacity:0.10"></i><i style="left:27px;top:0px;width:5px;height:5px;opacity:0.17"></i><i style="left:32px;top:0px;width:6px;height:5px;opacity:0.05"></i><i style="left:38px;top:0px;width:5px;height:5px;opacity:0.02"></i><i style="left:43px;top:0px;width:5px;height:5px;opacity:0.09"></i><i style="left:48px;top:0px;width:6px;height:5px;opacity:0.04"></i><i style="left:0px;top:5px;width:5px;height:6px;opacity:0.26"></i><i style="left:5px;top:5px;width:6px;height:6px;opacity:0.23"></i><i style="left:11px;top:5px;width:5px;height:6px;opacity:0.27"></i><i style="left:16px;top:5px;width:5px;height:6px;opacity:0.29"></i><i style="left:21px;top:5px;width:6px;height:6px;opacity:0.29"></i><i style="left:27px;top:5px;width:5px;height:6px;opacity:0.39"></i><i style="left:32px;top:5px;width:6px;height:6px;opacity:0.29"></i><i style="left:38px;top:5px;width:5px;height:6px;opacity:0.34"></i><i style="left:43px;top:5px;width:5px;height:6px;opacity:0.26"></i><i style="left:48px;top:5px;width:6px;height:6px;opacity:0.30"></i><i style="left:54px;top:5px;width:5px;height:6px;opacity:0.22"></i><i style="left:0px;top:11px;width:5px;height:5px;opacity:0.05"></i><i style="left:11px;top:11px;width:5px;height:5px;opacity:0.13"></i><i style="left:16px;top:11px;width:5px;height:5px;opacity:0.10"></i><i style="left:21px;top:11px;width:6px;height:5px;opacity:0.03"></i><i style="left:27px;top:11px;width:5px;height:5px;opacity:0.09"></i><i style="left:32px;top:11px;width:6px;height:5px;opacity:0.17"></i><i style="left:43px;top:11px;width:5px;height:5px;opacity:0.15"></i><i style="left:48px;top:11px;width:6px;height:5px;opacity:0.08"></i><i style="left:54px;top:11px;width:5px;height:5px;opacity:0.09"></i></div>
<div class="mz" style="left:640px;top:561px;width:53px;height:15.90px;--c:#555"><i style="left:0px;top:0px;width:5px;height:5px;opacity:0.15"></i><i style="left:5px;top:0px;width:6px;height:5px;opacity:0.07"></i><i style="left:11px;top:0px;width:5px;height:5px;opacity:0.09"></i><i style="left:16px;top:0px;width:5px;height:5px;opacity:0.12"></i><i style="left:21px;top:0px;width:5px;height:5px;opacity:0.18"></i><i style="left:26px;top:0px;width:6px;height:5px;opacity:0.06"></i><i style="left:32px;top:0px;width:5px;height:5px;opacity:0.15"></i><i style="left:37px;top:0px;width:5px;height:5px;opacity:0.13"></i><i style="left:42px;top:0px;width:6px;height:5px;opacity:0.11"></i><i style="left:48px;top:0px;width:5px;height:5px;opacity:0.07"></i><i style="left:0px;top:5px;width:5px;height:6px;opacity:0.30"></i><i style="left:5px;top:5px;width:6px;height:6px;opacity:0.23"></i><i style="left:11px;top:5px;width:5px;height:6px;opacity:0.25"></i><i style="left:16px;top:5px;width:5px;height:6px;opacity:0.24"></i><i style="left:21px;top:5px;width:5px;height:6px;opacity:0.39"></i><i style="left:26px;top:5px;width:6px;height:6px;opacity:0.28"></i><i style="left:32px;top:5px;width:5px;height:6px;opacity:0.26"></i><i style="left:37px;top:5px;width:5px;height:6px;opacity:0.24"></i><i style="left:42px;top:5px;width:6px;height:6px;opacity:0.41"></i><i style="left:48px;top:5px;width:5px;height:6px;opacity:0.42"></i><i style="left:0px;top:11px;width:5px;height:5px;opacity:0.12"></i><i style="left:5px;top:11px;width:6px;height:5px;opacity:0.05"></i><i style="left:11px;top:11px;width:5px;height:5px;opacity:0.04"></i><i style="left:16px;top:11px;width:5px;height:5px;opacity:0.05"></i><i style="left:21px;top:11px;width:5px;height:5px;opacity:0.08"></i><i style="left:26px;top:11px;width:6px;height:5px;opacity:0.03"></i><i style="left:32px;top:11px;width:5px;height:5px;opacity:0.08"></i><i style="left:37px;top:11px;width:5px;height:5px;opacity:0.05"></i><i style="left:42px;top:11px;width:6px;height:5px;opacity:0.17"></i><i style="left:48px;top:11px;width:5px;height:5px;opacity:0.18"></i></div>
<div class="dots" style="top:567px"><i style="left:0"></i><i style="left:5.5px"></i><i style="left:11px"></i></div>
<div class="cb off" style="top:603.71px"></div>
<div class="mz" style="left:282px;top:602px;width:22px;height:16.50px;--c:#555"><i style="left:0px;top:0px;width:6px;height:6px;opacity:0.10"></i><i style="left:6px;top:0px;width:5px;height:6px;opacity:0.04"></i><i style="left:11px;top:0px;width:5px;height:6px;opacity:0.17"></i><i style="left:16px;top:0px;width:6px;height:6px;opacity:0.06"></i><i style="left:0px;top:6px;width:6px;height:5px;opacity:0.30"></i><i style="left:6px;top:6px;width:5px;height:5px;opacity:0.22"></i><i style="left:11px;top:6px;width:5px;height:5px;opacity:0.31"></i><i style="left:16px;top:6px;width:6px;height:5px;opacity:0.33"></i><i style="left:0px;top:11px;width:6px;height:5px;opacity:0.09"></i><i style="left:6px;top:11px;width:5px;height:5px;opacity:0.04"></i><i style="left:11px;top:11px;width:5px;height:5px;opacity:0.09"></i></div>
<div class="mz" style="left:315px;top:602px;width:21px;height:15.75px;--c:#555"><i style="left:0px;top:0px;width:5px;height:5px;opacity:0.05"></i><i style="left:10px;top:0px;width:6px;height:5px;opacity:0.07"></i><i style="left:0px;top:5px;width:5px;height:5px;opacity:0.23"></i><i style="left:5px;top:5px;width:5px;height:5px;opacity:0.29"></i><i style="left:10px;top:5px;width:6px;height:5px;opacity:0.27"></i><i style="left:16px;top:5px;width:5px;height:5px;opacity:0.35"></i><i style="left:0px;top:10px;width:5px;height:6px;opacity:0.10"></i><i style="left:5px;top:10px;width:5px;height:6px;opacity:0.14"></i><i style="left:10px;top:10px;width:6px;height:6px;opacity:0.12"></i><i style="left:16px;top:10px;width:5px;height:6px;opacity:0.13"></i></div>
<div class="mz" style="left:459px;top:602px;width:32px;height:16.00px;--c:#555"><i style="left:0px;top:0px;width:5px;height:5px;opacity:0.16"></i><i style="left:5px;top:0px;width:6px;height:5px;opacity:0.07"></i><i style="left:11px;top:0px;width:5px;height:5px;opacity:0.06"></i><i style="left:16px;top:0px;width:5px;height:5px;opacity:0.18"></i><i style="left:21px;top:0px;width:6px;height:5px;opacity:0.03"></i><i style="left:27px;top:0px;width:5px;height:5px;opacity:0.13"></i><i style="left:0px;top:5px;width:5px;height:6px;opacity:0.37"></i><i style="left:5px;top:5px;width:6px;height:6px;opacity:0.23"></i><i style="left:11px;top:5px;width:5px;height:6px;opacity:0.41"></i><i style="left:16px;top:5px;width:5px;height:6px;opacity:0.43"></i><i style="left:21px;top:5px;width:6px;height:6px;opacity:0.36"></i><i style="left:27px;top:5px;width:5px;height:6px;opacity:0.39"></i><i style="left:0px;top:11px;width:5px;height:5px;opacity:0.15"></i><i style="left:5px;top:11px;width:6px;height:5px;opacity:0.03"></i><i style="left:11px;top:11px;width:5px;height:5px;opacity:0.09"></i><i style="left:16px;top:11px;width:5px;height:5px;opacity:0.09"></i><i style="left:21px;top:11px;width:6px;height:5px;opacity:0.15"></i><i style="left:27px;top:11px;width:5px;height:5px;opacity:0.14"></i></div>
<div class="mz" style="left:501px;top:602px;width:32px;height:16.00px;--c:#555"><i style="left:0px;top:0px;width:5px;height:5px;opacity:0.15"></i><i style="left:5px;top:0px;width:6px;height:5px;opacity:0.11"></i><i style="left:11px;top:0px;width:5px;height:5px;opacity:0.16"></i><i style="left:16px;top:0px;width:5px;height:5px;opacity:0.12"></i><i style="left:21px;top:0px;width:6px;height:5px;opacity:0.12"></i><i style="left:27px;top:0px;width:5px;height:5px;opacity:0.04"></i><i style="left:0px;top:5px;width:5px;height:6px;opacity:0.23"></i><i style="left:5px;top:5px;width:6px;height:6px;opacity:0.25"></i><i style="left:11px;top:5px;width:5px;height:6px;opacity:0.30"></i><i style="left:16px;top:5px;width:5px;height:6px;opacity:0.24"></i><i style="left:21px;top:5px;width:6px;height:6px;opacity:0.41"></i><i style="left:27px;top:5px;width:5px;height:6px;opacity:0.35"></i><i style="left:0px;top:11px;width:5px;height:5px;opacity:0.11"></i><i style="left:5px;top:11px;width:6px;height:5px;opacity:0.11"></i><i style="left:11px;top:11px;width:5px;height:5px;opacity:0.12"></i><i style="left:16px;top:11px;width:5px;height:5px;opacity:0.09"></i><i style="left:27px;top:11px;width:5px;height:5px;opacity:0.14"></i></div>
<div class="mz" style="left:640px;top:602px;width:74px;height:15.86px;--c:#555"><i style="left:0px;top:0px;width:5px;height:5px;opacity:0.13"></i><i style="left:5px;top:0px;width:6px;height:5px;opacity:0.09"></i><i style="left:11px;top:0px;width:5px;height:5px;opacity:0.10"></i><i style="left:16px;top:0px;width:5px;height:5px;opacity:0.12"></i><i style="left:26px;top:0px;width:6px;height:5px;opacity:0.13"></i><i style="left:32px;top:0px;width:5px;height:5px;opacity:0.05"></i><i style="left:42px;top:0px;width:6px;height:5px;opacity:0.05"></i><i style="left:48px;top:0px;width:5px;height:5px;opacity:0.13"></i><i style="left:53px;top:0px;width:5px;height:5px;opacity:0.04"></i><i style="left:58px;top:0px;width:5px;height:5px;opacity:0.13"></i><i style="left:63px;top:0px;width:6px;height:5px;opacity:0.18"></i><i style="left:69px;top:0px;width:5px;height:5px;opacity:0.09"></i><i style="left:0px;top:5px;width:5px;height:6px;opacity:0.31"></i><i style="left:5px;top:5px;width:6px;height:6px;opacity:0.33"></i><i style="left:11px;top:5px;width:5px;height:6px;opacity:0.38"></i><i style="left:16px;top:5px;width:5px;height:6px;opacity:0.40"></i><i style="left:21px;top:5px;width:5px;height:6px;opacity:0.36"></i><i style="left:26px;top:5px;width:6px;height:6px;opacity:0.37"></i><i style="left:32px;top:5px;width:5px;height:6px;opacity:0.24"></i><i style="left:37px;top:5px;width:5px;height:6px;opacity:0.25"></i><i style="left:42px;top:5px;width:6px;height:6px;opacity:0.28"></i><i style="left:48px;top:5px;width:5px;height:6px;opacity:0.39"></i><i style="left:53px;top:5px;width:5px;height:6px;opacity:0.29"></i><i style="left:58px;top:5px;width:5px;height:6px;opacity:0.35"></i><i style="left:63px;top:5px;width:6px;height:6px;opacity:0.22"></i><i style="left:69px;top:5px;width:5px;height:6px;opacity:0.23"></i><i style="left:0px;top:11px;width:5px;height:5px;opacity:0.05"></i><i style="left:5px;top:11px;width:6px;height:5px;opacity:0.12"></i><i style="left:11px;top:11px;width:5px;height:5px;opacity:0.12"></i><i style="left:16px;top:11px;width:5px;height:5px;opacity:0.12"></i><i style="left:21px;top:11px;width:5px;height:5px;opacity:0.05"></i><i style="left:26px;top:11px;width:6px;height:5px;opacity:0.09"></i><i style="left:32px;top:11px;width:5px;height:5px;opacity:0.08"></i><i style="left:37px;top:11px;width:5px;height:5px;opacity:0.08"></i><i style="left:42px;top:11px;width:6px;height:5px;opacity:0.02"></i><i style="left:48px;top:11px;width:5px;height:5px;opacity:0.16"></i><i style="left:53px;top:11px;width:5px;height:5px;opacity:0.04"></i><i style="left:58px;top:11px;width:5px;height:5px;opacity:0.18"></i><i style="left:63px;top:11px;width:6px;height:5px;opacity:0.17"></i></div>
<div class="dots" style="top:609px"><i style="left:0"></i><i style="left:5.5px"></i><i style="left:11px"></i></div>
<div class="cb off" style="top:645.27px"></div>
<div class="mz" style="left:282px;top:644px;width:22px;height:16.50px;--c:#555"><i style="left:0px;top:0px;width:6px;height:6px;opacity:0.08"></i><i style="left:6px;top:0px;width:5px;height:6px;opacity:0.15"></i><i style="left:11px;top:0px;width:5px;height:6px;opacity:0.17"></i><i style="left:16px;top:0px;width:6px;height:6px;opacity:0.08"></i><i style="left:0px;top:6px;width:6px;height:5px;opacity:0.28"></i><i style="left:6px;top:6px;width:5px;height:5px;opacity:0.27"></i><i style="left:11px;top:6px;width:5px;height:5px;opacity:0.44"></i><i style="left:16px;top:6px;width:6px;height:5px;opacity:0.27"></i><i style="left:0px;top:11px;width:6px;height:5px;opacity:0.10"></i><i style="left:6px;top:11px;width:5px;height:5px;opacity:0.03"></i><i style="left:11px;top:11px;width:5px;height:5px;opacity:0.09"></i><i style="left:16px;top:11px;width:6px;height:5px;opacity:0.17"></i></div>
<div class="mz" style="left:315px;top:644px;width:15px;height:15.00px;--c:#555"><i style="left:0px;top:0px;width:5px;height:5px;opacity:0.02"></i><i style="left:5px;top:0px;width:5px;height:5px;opacity:0.15"></i><i style="left:10px;top:0px;width:5px;height:5px;opacity:0.09"></i><i style="left:0px;top:5px;width:5px;height:5px;opacity:0.42"></i><i style="left:5px;top:5px;width:5px;height:5px;opacity:0.38"></i><i style="left:10px;top:5px;width:5px;height:5px;opacity:0.27"></i><i style="left:0px;top:10px;width:5px;height:5px;opacity:0.16"></i><i style="left:5px;top:10px;width:5px;height:5px;opacity:0.09"></i></div>
<div class="mz" style="left:459px;top:644px;width:74px;height:15.86px;--c:#555"><i style="left:5px;top:0px;width:6px;height:5px;opacity:0.09"></i><i style="left:11px;top:0px;width:5px;height:5px;opacity:0.08"></i><i style="left:16px;top:0px;width:5px;height:5px;opacity:0.05"></i><i style="left:21px;top:0px;width:5px;height:5px;opacity:0.03"></i><i style="left:26px;top:0px;width:6px;height:5px;opacity:0.06"></i><i style="left:32px;top:0px;width:5px;height:5px;opacity:0.06"></i><i style="left:37px;top:0px;width:5px;height:5px;opacity:0.15"></i><i style="left:48px;top:0px;width:5px;height:5px;opacity:0.14"></i><i style="left:53px;top:0px;width:5px;height:5px;opacity:0.15"></i><i style="left:58px;top:0px;width:5px;height:5px;opacity:0.02"></i><i style="left:63px;top:0px;width:6px;height:5px;opacity:0.17"></i><i style="left:69px;top:0px;width:5px;height:5px;opacity:0.13"></i><i style="left:0px;top:5px;width:5px;height:6px;opacity:0.43"></i><i style="left:5px;top:5px;width:6px;height:6px;opacity:0.29"></i><i style="left:11px;top:5px;width:5px;height:6px;opacity:0.31"></i><i style="left:16px;top:5px;width:5px;height:6px;opacity:0.31"></i><i style="left:21px;top:5px;width:5px;height:6px;opacity:0.45"></i><i style="left:26px;top:5px;width:6px;height:6px;opacity:0.36"></i><i style="left:32px;top:5px;width:5px;height:6px;opacity:0.30"></i><i style="left:37px;top:5px;width:5px;height:6px;opacity:0.32"></i><i style="left:42px;top:5px;width:6px;height:6px;opacity:0.28"></i><i style="left:48px;top:5px;width:5px;height:6px;opacity:0.23"></i><i style="left:53px;top:5px;width:5px;height:6px;opacity:0.24"></i><i style="left:58px;top:5px;width:5px;height:6px;opacity:0.41"></i><i style="left:63px;top:5px;width:6px;height:6px;opacity:0.29"></i><i style="left:69px;top:5px;width:5px;height:6px;opacity:0.44"></i><i style="left:0px;top:11px;width:5px;height:5px;opacity:0.04"></i><i style="left:5px;top:11px;width:6px;height:5px;opacity:0.05"></i><i style="left:11px;top:11px;width:5px;height:5px;opacity:0.09"></i><i style="left:16px;top:11px;width:5px;height:5px;opacity:0.03"></i><i style="left:21px;top:11px;width:5px;height:5px;opacity:0.07"></i><i style="left:26px;top:11px;width:6px;height:5px;opacity:0.17"></i><i style="left:32px;top:11px;width:5px;height:5px;opacity:0.16"></i><i style="left:37px;top:11px;width:5px;height:5px;opacity:0.15"></i><i style="left:42px;top:11px;width:6px;height:5px;opacity:0.11"></i><i style="left:48px;top:11px;width:5px;height:5px;opacity:0.16"></i><i style="left:53px;top:11px;width:5px;height:5px;opacity:0.17"></i><i style="left:58px;top:11px;width:5px;height:5px;opacity:0.10"></i><i style="left:63px;top:11px;width:6px;height:5px;opacity:0.13"></i></div>
<div class="mz" style="left:640px;top:644px;width:50px;height:16.67px;--c:#555"><i style="left:0px;top:0px;width:6px;height:6px;opacity:0.13"></i><i style="left:6px;top:0px;width:5px;height:6px;opacity:0.08"></i><i style="left:11px;top:0px;width:6px;height:6px;opacity:0.14"></i><i style="left:17px;top:0px;width:5px;height:6px;opacity:0.12"></i><i style="left:22px;top:0px;width:6px;height:6px;opacity:0.05"></i><i style="left:33px;top:0px;width:6px;height:6px;opacity:0.17"></i><i style="left:39px;top:0px;width:5px;height:6px;opacity:0.02"></i><i style="left:44px;top:0px;width:6px;height:6px;opacity:0.08"></i><i style="left:0px;top:6px;width:6px;height:5px;opacity:0.30"></i><i style="left:6px;top:6px;width:5px;height:5px;opacity:0.29"></i><i style="left:11px;top:6px;width:6px;height:5px;opacity:0.39"></i><i style="left:17px;top:6px;width:5px;height:5px;opacity:0.44"></i><i style="left:22px;top:6px;width:6px;height:5px;opacity:0.28"></i><i style="left:28px;top:6px;width:5px;height:5px;opacity:0.37"></i><i style="left:33px;top:6px;width:6px;height:5px;opacity:0.29"></i><i style="left:39px;top:6px;width:5px;height:5px;opacity:0.35"></i><i style="left:44px;top:6px;width:6px;height:5px;opacity:0.31"></i><i style="left:0px;top:11px;width:6px;height:6px;opacity:0.03"></i><i style="left:6px;top:11px;width:5px;height:6px;opacity:0.03"></i><i style="left:11px;top:11px;width:6px;height:6px;opacity:0.04"></i><i style="left:17px;top:11px;width:5px;height:6px;opacity:0.16"></i><i style="left:22px;top:11px;width:6px;height:6px;opacity:0.09"></i><i style="left:28px;top:11px;width:5px;height:6px;opacity:0.04"></i><i style="left:33px;top:11px;width:6px;height:6px;opacity:0.16"></i><i style="left:39px;top:11px;width:5px;height:6px;opacity:0.18"></i><i style="left:44px;top:11px;width:6px;height:6px;opacity:0.08"></i></div>
<div class="dots" style="top:650px"><i style="left:0"></i><i style="left:5.5px"></i><i style="left:11px"></i></div>
<div class="t" id="r0a" style="left:800.04px;top:356.90px;font-size:11.80px;color:#1e3a40;letter-spacing:-0.160px">先生</div>
<div class="t" id="r0b" style="left:963.32px;top:356.90px;font-size:11.80px;color:#1e3a40">有効</div>
<div class="t" id="r0c" style="left:1188.00px;top:355.59px;font-size:12.50px;color:#1e3a40;-webkit-text-stroke:0">0</div>
<div class="t" id="r1a" style="left:800.04px;top:398.47px;font-size:11.80px;color:#1e3a40;letter-spacing:-0.160px">先生</div>
<div class="t" id="r1b" style="left:963.32px;top:398.47px;font-size:11.80px;color:#1e3a40">有効</div>
<div class="t" id="r1c" style="left:1188.00px;top:397.16px;font-size:12.50px;color:#1e3a40;-webkit-text-stroke:0">0</div>
<div class="t" id="r2a" style="left:800.04px;top:440.04px;font-size:11.80px;color:#333;letter-spacing:-0.160px">先生</div>
<div class="t" id="r2b" style="left:963.32px;top:440.04px;font-size:11.80px;color:#333">有効</div>
<div class="t" id="r2c" style="left:1188.00px;top:438.73px;font-size:12.50px;color:#333;-webkit-text-stroke:0">0</div>
<div class="t" id="r3a" style="left:800.04px;top:481.61px;font-size:11.80px;color:#1e3a40;letter-spacing:-0.160px">先生</div>
<div class="t" id="r3b" style="left:963.32px;top:481.61px;font-size:11.80px;color:#1e3a40">有効</div>
<div class="t" id="r3c" style="left:1188.00px;top:480.30px;font-size:12.50px;color:#1e3a40;-webkit-text-stroke:0">0</div>
<div class="t" id="r4a" style="left:800.04px;top:523.18px;font-size:11.80px;color:#333;letter-spacing:-0.160px">先生</div>
<div class="t" id="r4b" style="left:963.32px;top:523.18px;font-size:11.80px;color:#333">有効</div>
<div class="t" id="r4c" style="left:1188.00px;top:521.87px;font-size:12.50px;color:#333;-webkit-text-stroke:0">0</div>
<div class="t" id="r5a" style="left:800.04px;top:564.75px;font-size:11.80px;color:#333;letter-spacing:-0.160px">管理者</div>
<div class="t" id="r5b" style="left:963.32px;top:564.75px;font-size:11.80px;color:#333">有効</div>
<div class="t" id="r5c" style="left:1188.00px;top:563.44px;font-size:12.50px;color:#333;-webkit-text-stroke:0">5</div>
<div class="t" id="r6a" style="left:800.04px;top:606.32px;font-size:11.80px;color:#333;letter-spacing:-0.160px">先生</div>
<div class="t" id="r6b" style="left:963.32px;top:606.32px;font-size:11.80px;color:#333">有効</div>
<div class="t" id="r6c" style="left:1188.00px;top:605.01px;font-size:12.50px;color:#333;-webkit-text-stroke:0">1</div>
<div class="t" id="r7a" style="left:800.04px;top:647.89px;font-size:11.80px;color:#333;letter-spacing:-0.160px">先生</div>
<div class="t" id="r7b" style="left:963.32px;top:647.89px;font-size:11.80px;color:#333">有効</div>
<div class="t" id="r7c" style="left:1188.00px;top:646.58px;font-size:12.50px;color:#333;-webkit-text-stroke:0">1</div>
</div>

<svg class="a" style="left:1252px;top:345px" width="5" height="3" viewBox="0 0 5 3"><path d="M0 3 L2.5 0 L5 3 Z" fill="#999"/></svg>
<div class="a" style="left:1250px;top:351px;width:8.5px;height:131px;background:#c1c1c1"></div>
<svg class="a" style="left:1252px;top:648.5px" width="5" height="3" viewBox="0 0 5 3"><path d="M0 0 L2.5 3 L5 0 Z" fill="#666"/></svg>

<div class="a" style="left:228px;top:335px;width:47px;height:176px;border:5px solid #e5680c"></div>

<div class="a" style="left:1220px;top:660px;width:47px;height:47px;border-radius:50%;background:#127699;box-shadow:0 2px 4px rgba(0,0,0,.25)"></div>
<svg class="a" style="left:1237.5px;top:678px" width="12" height="12" viewBox="0 0 12 12" stroke="#fff" stroke-width="2"><path d="M6 0 V12 M0 6 H12"/></svg>

<div class="t" id="cp" style="left:41.04px;top:11.96px;font-size:21.04px;color:#444;letter-spacing:0.364px;-webkit-text-stroke:0">ClassPad.net</div>
<div class="t" id="acct" style="left:1191.84px;top:10.48px;font-size:9.24px;color:#777;letter-spacing:0.540px">学校IDアカウント</div>
<div class="t" id="exw" style="left:39.84px;top:69.80px;font-size:14.66px;color:#fff;letter-spacing:0.427px;font-weight:bold;-webkit-text-stroke:0">EX-word</div>
<div class="t" id="tools" style="left:40.32px;top:116.32px;font-size:15.69px;color:#fff;letter-spacing:-0.520px;font-weight:bold;-webkit-text-stroke:0">Tools</div>
<div class="t" id="jug" style="left:13.16px;top:158.60px;font-size:11.80px;color:#a9b3d3;letter-spacing:1.280px">授業</div>
<div class="t" id="g1" style="left:40.16px;top:191.28px;font-size:13.30px;color:#fff;letter-spacing:0.507px">1学年担当授業</div>
<div class="t" id="jishu" style="left:11.88px;top:224.64px;font-size:13.30px;color:#fff;letter-spacing:1.120px">自主学習</div>
<div class="t" id="izen" style="left:12.68px;top:259.28px;font-size:13.30px;color:#fff;letter-spacing:0.840px">以前の授業</div>
<div class="t" id="anata" style="left:41.04px;top:305.84px;font-size:13.30px;color:#fff;letter-spacing:-0.480px">あなたのライセンス</div>
<div class="t" id="kanri" style="left:42.64px;top:358.92px;font-size:13.30px;color:#fff;letter-spacing:-0.453px">管理者メニュー</div>
<div class="t" id="s1" style="left:54.20px;top:397.80px;font-size:13.30px;color:#fff;letter-spacing:0.427px">先生管理</div>
<div class="t" id="s2" style="left:55.00px;top:437.96px;font-size:13.30px;color:#fff;letter-spacing:0.267px">生徒管理</div>
<div class="t" id="s3" style="left:54.52px;top:477.80px;font-size:13.30px;color:#fff;letter-spacing:-0.440px">クラス管理</div>
<div class="t" id="s4" style="left:55.64px;top:517.64px;font-size:13.30px;color:#fff;letter-spacing:0.160px">授業管理</div>
<div class="t" id="s5" style="left:55.64px;top:557.80px;font-size:13.30px;color:#fff;letter-spacing:-0.046px">外部サービス連携</div>
<div class="t" id="s6" style="left:26.68px;top:597.48px;font-size:13.30px;color:#fff;letter-spacing:0.373px">年度処理</div>
<div class="t" id="s7" style="left:26.68px;top:637.32px;font-size:13.30px;color:#fff;letter-spacing:-0.305px">学校情報と所有ライセンス</div>
<div class="t" id="title" style="left:267.52px;top:69.80px;font-size:15.00px;color:#333;letter-spacing:0.267px">先生管理</div>
<div class="t" id="shibori" style="left:270.52px;top:116.16px;font-size:13.00px;color:#333;letter-spacing:-0.160px">絞り込み</div>
<div class="t" id="clear" style="left:1207.84px;top:116.48px;font-size:11.50px;color:#9ea3ad;letter-spacing:-2.000px">クリア</div>
<div class="t" id="lab1" style="left:773.96px;top:166.08px;font-size:11.50px;color:#6b717b;letter-spacing:-0.613px">役割と管理権限</div>
<div class="t" id="sel1" style="left:891.32px;top:166.28px;font-size:11.70px;color:#222;letter-spacing:-0.427px">条件なし</div>
<div class="t" id="lab2" style="left:253.20px;top:212.60px;font-size:11.50px;color:#6b717b;letter-spacing:-0.920px">キーワード</div>
<div class="t" id="ph" style="left:343.88px;top:213.40px;font-size:12.00px;color:#a8abb0;letter-spacing:1.455px">氏名・フリガナ・個人ID</div>
<div class="t" id="lab3" style="left:831.00px;top:212.60px;font-size:11.50px;color:#6b717b">状態</div>
<div class="t" id="sel2" style="left:891.32px;top:212.80px;font-size:11.70px;color:#222;letter-spacing:-0.427px">条件なし</div>
<div class="t" id="btn1" style="left:241.48px;top:268.96px;font-size:12.00px;color:#222;letter-spacing:-0.427px">一括処理</div>
<div class="t" id="btn2" style="left:308.68px;top:267.36px;font-size:12.00px;color:#222;letter-spacing:-1.080px">インポート</div>
<div class="t" id="showall" style="left:906.48px;top:278.28px;font-size:11.30px;color:#383838;letter-spacing:0.736px">選択中の先生を全て表示</div>
<div class="t" id="cnt1" style="left:1091.48px;top:278.28px;font-size:11.30px;color:#8c8c8c;letter-spacing:0.640px">選択中の人数：3</div>
<div class="t" id="cnt2" style="left:1200.64px;top:278.28px;font-size:11.30px;color:#8c8c8c;letter-spacing:0.448px">登録数：17</div>
<div class="t" id="h1" style="left:281.00px;top:315.60px;font-size:11.80px;color:#555;letter-spacing:0.600px">氏名</div>
<div class="t" id="h2" style="left:458.36px;top:314.80px;font-size:11.00px;color:#555;letter-spacing:0.107px">フリガナ</div>
<div class="t" id="h3" style="left:638.64px;top:315.60px;font-size:11.00px;color:#555;letter-spacing:0.907px">個人ID</div>
<div class="t" id="h4" style="left:801.00px;top:315.60px;font-size:11.00px;color:#555;letter-spacing:0.640px">役割</div>
<div class="t" id="h5" style="left:963.00px;top:315.60px;font-size:11.00px;color:#555;letter-spacing:1.440px">状態</div>
<div class="t" id="h6" style="left:1128.68px;top:314.80px;font-size:11.00px;color:#555;letter-spacing:-0.480px">ライセンス</div>
</body></html>
